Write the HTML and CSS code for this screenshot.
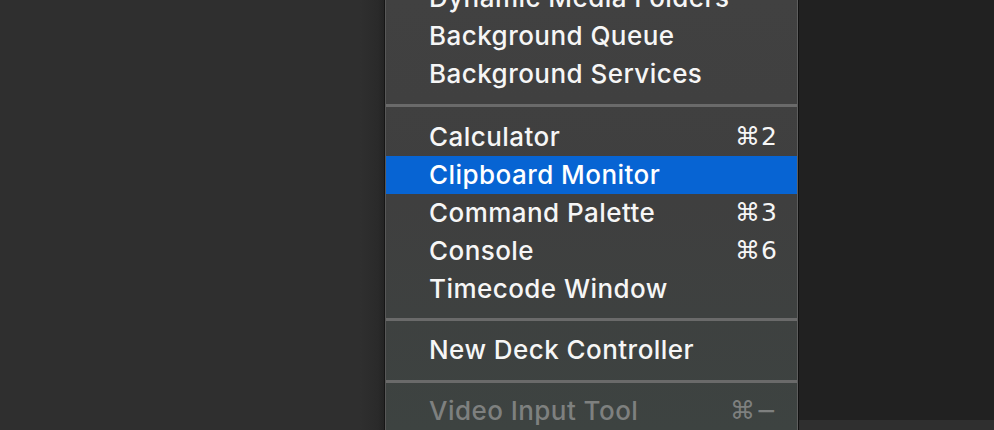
FILE: index.html
```html
<!DOCTYPE html>
<html>
<head>
<meta charset="utf-8">
<link rel="stylesheet" href="styles.css">
</head>
<body>
<div class="screen">
  <div class="pane-left"></div>
  <div class="menu">
    <ul class="menu-list">
      <li class="item"><span class="label">Dynamic Media Folders</span></li>
      <li class="item"><span class="label">Background Queue</span></li>
      <li class="item"><span class="label">Background Services</span></li>
      <li class="sep sep-a"></li>
      <li class="item"><span class="label">Calculator</span><span class="key">⌘2</span></li>
      <li class="item selected"><span class="label">Clipboard Monitor</span></li>
      <li class="item"><span class="label">Command Palette</span><span class="key">⌘3</span></li>
      <li class="item"><span class="label">Console</span><span class="key">⌘6</span></li>
      <li class="item"><span class="label">Timecode Window</span></li>
      <li class="sep sep-b"></li>
      <li class="item"><span class="label">New Deck Controller</span></li>
      <li class="sep sep-c"></li>
      <li class="item disabled"><span class="label">Video Input Tool</span><span class="key">⌘−</span></li>
    </ul>
  </div>
  <div class="pane-right">
    <div class="pane-right-body"></div>
    <div class="pane-right-strip"></div>
  </div>
</div>
</body>
</html>
```

FILE: styles.css
```css
html, body {
  margin: 0;
  padding: 0;
}
body {
  width: 994px;
  height: 430px;
  overflow: hidden;
  background: #2f2f2f;
  font-family: Inter, "Noto Sans", "DejaVu Sans", sans-serif;
}
.screen {
  display: flex;
  height: 430px;
}
.pane-left {
  width: 384px;
  flex: none;
  background: linear-gradient(to right, #2f2f2f 0, #2f2f2f 360px, #2a2a2a 378px, #242424 384px);
}
.menu {
  width: 411px;
  flex: none;
  height: 430px;
  overflow: hidden;
  border-left: 1px solid #161616;
  border-right: 1px solid #121212;
  box-shadow: inset 1px 0 0 #585858, inset -1px 0 0 #5e5e5e;
  background: linear-gradient(to bottom, #414141 0, #3f3f3f 200px, #3d4341 430px);
  padding: 0 1px;
}
.menu-list {
  list-style: none;
  margin: -21px 0 0 0;
  padding: 0;
}
.item {
  height: 38px;
  box-sizing: border-box;
  padding: 0 19px 2px 43px;
  display: flex;
  align-items: center;
  justify-content: space-between;
  color: #f6f6f6;
  font-size: 26px;
  font-weight: 500;
  letter-spacing: 0.45px;
}
.item .label {
  white-space: nowrap;
}
.item .key {
  font-family: "DejaVu Sans", sans-serif;
  font-size: 25px;
  letter-spacing: 1px;
}
.item.selected {
  background: #0764d3;
  color: #ffffff;
}
.item.disabled {
  color: #7e807f;
}
.sep {
  display: flex;
  flex-direction: column;
  box-sizing: border-box;
}
.sep::before {
  content: "";
  display: block;
  height: 3px;
  background: #6a6a6a;
}
.sep-a {
  height: 25px;
  padding-top: 11px;
}
.sep-b {
  height: 23px;
  padding-top: 10px;
}
.sep-c {
  height: 23px;
  padding-top: 11px;
}
.pane-right {
  flex: 1;
  display: flex;
  flex-direction: column;
  background: #212121;
}
.pane-right-body {
  flex: 1;
}
.pane-right-strip {
  height: 10px;
  background: #2f2f2f;
}
```
